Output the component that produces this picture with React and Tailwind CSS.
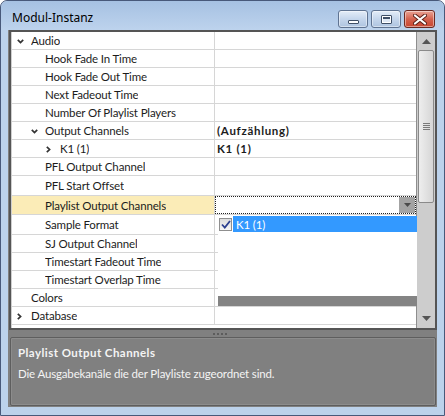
import React from "react";

const rows = [
  { label: "Audio", level: 0, exp: "down" },
  { label: "Hook Fade In Time", level: 1 },
  { label: "Hook Fade Out Time", level: 1 },
  { label: "Next Fadeout Time", level: 1 },
  { label: "Number Of Playlist Players", level: 1 },
  { label: "Output Channels", level: 1, exp: "down", value: "(Aufzählung)" },
  { label: "K1 (1)", level: 2, exp: "right", value: "K1 (1)" },
  { label: "PFL Output Channel", level: 1 },
  { label: "PFL Start Offset", level: 1, h: "h-[20px]" },
  { label: "Playlist Output Channels", level: 1, selected: true, h: "h-[19px]" },
  { label: "Sample Format", level: 1, h: "h-[20px]" },
  { label: "SJ Output Channel", level: 1 },
  { label: "Timestart Fadeout Time", level: 1 },
  { label: "Timestart Overlap Time", level: 1 },
  { label: "Colors", level: 0 },
  { label: "Database", level: 0, exp: "right" },
];

const indent = ["pl-[5px]", "pl-[19px]", "pl-[34px]"];

const Chevron = ({ dir }) =>
  dir === "down" ? (
    <svg width="7" height="5" viewBox="0 0 7 5">
      <polyline points="0.8,0.8 3.5,3.6 6.2,0.8" fill="none" stroke="#333" strokeWidth="1.7" />
    </svg>
  ) : (
    <svg width="5" height="7" viewBox="0 0 5 7">
      <polyline points="0.8,0.8 3.6,3.5 0.8,6.2" fill="none" stroke="#333" strokeWidth="1.7" />
    </svg>
  );

const TitleButton = ({ kind }) => {
  const red = kind === "close";
  return (
    <div
      className={`flex h-[18px] items-center justify-center rounded-[3px] border ${
        red
          ? "w-[31px] border-[#6b2a22] bg-gradient-to-b from-[#e9a395] via-[#d4624f] to-[#c8452f]"
          : "w-[30px] border-[#5f7391] bg-gradient-to-b from-[#e4edf8] via-[#c5d6ec] to-[#aec4e0]"
      } shadow-[inset_0_0_0_1px_rgba(255,255,255,0.45)]`}
    >
      {kind === "min" && (
        <div className="mt-[6px] h-[4px] w-[11px] rounded-[1px] border border-[#3f4f66] bg-white" />
      )}
      {kind === "max" && (
        <div className="h-[9px] w-[11px] rounded-[1px] border border-[#3f4f66] bg-white p-[1px]">
          <div className="h-full w-full border-t-[2px] border-[#3f4f66] bg-[#dfe8f4]" />
        </div>
      )}
      {kind === "close" && (
        <svg width="14" height="11" viewBox="0 0 14 11">
          <path d="M2 1.5 L12 9.5 M12 1.5 L2 9.5" stroke="#5a2018" strokeWidth="4" strokeLinecap="round" />
          <path d="M2 1.5 L12 9.5 M12 1.5 L2 9.5" stroke="#ffffff" strokeWidth="2.2" strokeLinecap="round" />
        </svg>
      )}
    </div>
  );
};

const GridRow = ({ row }) => (
  <div className={`flex ${row.h || "h-[18px]"} border-b border-[#d6d6d6]`}>
    <div
      className={`flex w-[203px] shrink-0 items-center border-r border-[#d6d6d6] pt-[1px] ${indent[row.level]} ${
        row.selected ? "bg-[#fbecb7]" : ""
      }`}
    >
      <span className="flex w-[14px] shrink-0 items-center">{row.exp && <Chevron dir={row.exp} />}</span>
      <span className="truncate">{row.label}</span>
    </div>
    <div className="relative flex flex-1 items-center pl-[2px] pt-[1px]">
      {row.value && <span className="font-bold tracking-[0.7px]">{row.value}</span>}
      {row.selected && (
        <div className="absolute inset-0 flex justify-end border border-dotted border-[#222]">
          <div className="flex w-[16px] items-center justify-center bg-[#a3a3a3]">
            <svg width="7" height="4" viewBox="0 0 7 4">
              <polygon points="0,0 7,0 3.5,4" fill="#4a4a4a" />
            </svg>
          </div>
        </div>
      )}
    </div>
  </div>
);

const ScrollBar = () => (
  <div className="flex w-[19px] shrink-0 flex-col border-l border-[#8e8e8e] bg-[#cdcdcd]">
    <div className="flex h-[17px] items-center justify-center pt-[2px]">
      <svg width="9" height="5" viewBox="0 0 9 5">
        <polygon points="0,5 9,5 4.5,0" fill="#555" />
      </svg>
    </div>
    <div className="mx-[1px] mt-[1px] flex h-[153px] items-center justify-center rounded-[2px] border border-[#8a8a8a] bg-gradient-to-r from-[#eeeeee] to-[#d6d6d6]">
      <div className="flex flex-col gap-[1px]">
        <div className="h-px w-[7px] bg-[#7a7a7a]" />
        <div className="h-px w-[7px] bg-[#7a7a7a]" />
        <div className="h-px w-[7px] bg-[#7a7a7a]" />
        <div className="h-px w-[7px] bg-[#7a7a7a]" />
      </div>
    </div>
    <div className="flex-1" />
    <div className="flex h-[17px] items-center justify-center pb-[3px]">
      <svg width="9" height="5" viewBox="0 0 9 5">
        <polygon points="0,0 9,0 4.5,5" fill="#555" />
      </svg>
    </div>
  </div>
);

// checked list shown under the "Playlist Output Channels" editor
const ChannelDropdown = () => (
  <div className="absolute left-[206px] top-[184px] flex h-[90px] w-[199px] flex-col bg-white">
    <div className="flex h-[16px] items-center">
      <div className="ml-[1px] flex h-[13px] w-[13px] items-center justify-center border border-[#8f8f8f] bg-gradient-to-b from-[#dcdcdc] to-[#f6f6f6]">
        <svg width="10" height="9" viewBox="0 0 10 9">
          <path d="M1 4.5 L3.8 7.5 L9 1" fill="none" stroke="#2b3f8f" strokeWidth="1.8" />
        </svg>
      </div>
      <div className="ml-[1px] flex h-full flex-1 items-center bg-[#3399ff] pl-[3px] pt-[1px] text-white">K1 (1)</div>
    </div>
    <div className="flex-1" />
    <div className="h-[10px] bg-[#848484]" />
  </div>
);

export default function App() {
  return (
    <div className="h-[416px] w-[445px] bg-white font-['Noto_Sans',_sans-serif]">
      <div className="flex h-full w-full flex-col rounded-t-[7px] border border-[#48597a] bg-[#bcd2eb]">
        <div className="flex h-[29px] shrink-0 items-start rounded-t-[7px] bg-gradient-to-b from-[#a6c1e2] to-[#bdd3ed] pl-[11px] pr-[9px]">
          <span className="mt-[9px] text-[12px] leading-[16px] text-black">Modul-Instanz</span>
          <div className="ml-auto mt-[9px] flex gap-[3px]">
            <TitleButton kind="min" />
            <TitleButton kind="max" />
            <TitleButton kind="close" />
          </div>
        </div>

        <div className="mx-[7px] flex flex-1 flex-col bg-[#808080] pl-[1px] font-['Lato',_sans-serif] text-[11.5px] leading-[14px] tracking-[-0.15px] text-[#1c1c1c]">
          <div className="flex h-[300px] border-2 border-[#555555] bg-white">
            <div className="relative flex-1 border-l border-[#cfcfcf]">
              {rows.map((row) => (
                <GridRow key={row.label} row={row} />
              ))}
              <ChannelDropdown />
            </div>
            <ScrollBar />
          </div>

          <div className="flex h-[7px] items-center justify-center gap-[2px] pr-[6px]">
            <div className="h-[2px] w-[2px] bg-[#5c5c5c]" />
            <div className="h-[2px] w-[2px] bg-[#5c5c5c]" />
            <div className="h-[2px] w-[2px] bg-[#5c5c5c]" />
            <div className="h-[2px] w-[2px] bg-[#5c5c5c]" />
          </div>

          <div className="ml-px mr-[1px] h-[69px] rounded-[2px] border border-[#5e5e5e] bg-[#808080] px-[7px] pt-[8px] text-[#f4f4f4] shadow-[inset_0_0_0_1px_#8c8c8c]">
            <div className="font-bold tracking-[0.45px]">Playlist Output Channels</div>
            <div className="mt-[7px]">Die Ausgabekanäle die der Playliste zugeordnet sind.</div>
          </div>
          <div className="flex-1" />
        </div>
        <div className="h-[8px] shrink-0" />
      </div>
    </div>
  );
}
